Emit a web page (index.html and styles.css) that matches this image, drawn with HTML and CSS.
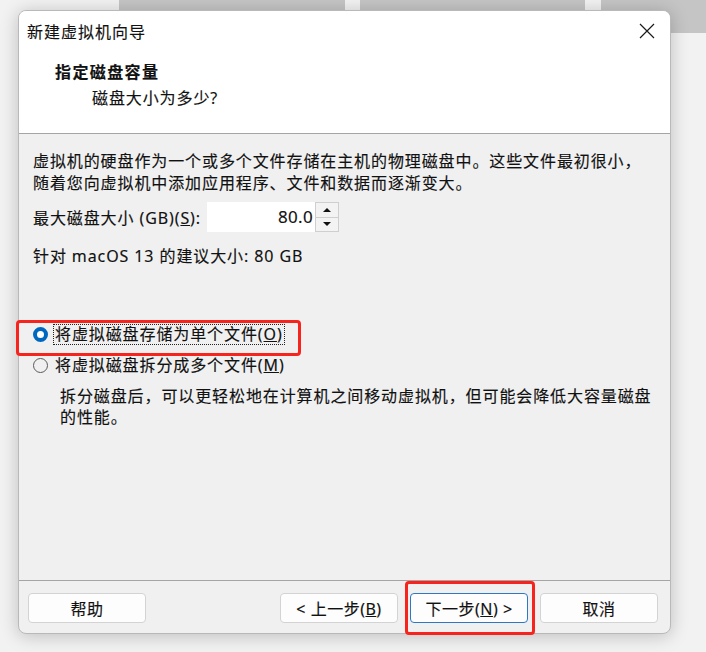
FILE: index.html
```html
<!DOCTYPE html>
<html lang="zh-CN">
<head>
<meta charset="utf-8">
<title>新建虚拟机向导</title>
<link rel="stylesheet" href="styles.css">
</head>
<body>
<div class="desktop">
  <div class="window">
    <div class="titlebar">
      <span class="title">新建虚拟机向导</span>
      <svg class="close" width="16" height="16" viewBox="0 0 16 16"><path d="M1 1L15 15M15 1L1 15" stroke="#1a1a1a" stroke-width="1.2" fill="none"/></svg>
    </div>
    <div class="header">
      <div class="h-title">指定磁盘容量</div>
      <div class="h-sub">磁盘大小为多少?</div>
    </div>
    <div class="content">
      <p class="intro">虚拟机的硬盘作为一个或多个文件存储在主机的物理磁盘中。这些文件最初很小，<br>随着您向虚拟机中添加应用程序、文件和数据而逐渐变大。</p>
      <div class="size-row">
        <span class="lbl">最大磁盘大小 (GB)(<u>S</u>):</span>
        <div class="spin">
          <div class="spin-field">80.0</div>
          <div class="spin-btns">
            <div class="spin-btn"><span class="tri-up"></span></div>
            <div class="spin-btn"><span class="tri-down"></span></div>
          </div>
        </div>
      </div>
      <p class="rec">针对 macOS 13 的建议大小: 80 GB</p>
      <div class="options">
        <div class="radio-row">
          <span class="radio checked"></span>
          <span class="radio-label focus">将虚拟磁盘存储为单个文件(<u>O</u>)</span>
        </div>
        <div class="radio-row">
          <span class="radio"></span>
          <span class="radio-label">将虚拟磁盘拆分成多个文件(<u>M</u>)</span>
        </div>
        <p class="desc">拆分磁盘后，可以更轻松地在计算机之间移动虚拟机，但可能会降低大容量磁盘<br>的性能。</p>
      </div>
    </div>
    <div class="footer">
      <button class="btn">帮助</button>
      <div class="spacer"></div>
      <button class="btn">&lt; 上一步(<u>B</u>)</button>
      <button class="btn primary">下一步(<u>N</u>) &gt;</button>
      <button class="btn">取消</button>
    </div>
  </div>
  <div class="mark mark-radio"></div>
  <div class="mark mark-next"></div>
</div>
</body>
</html>
```
FILE: styles.css
```css
* { box-sizing: border-box; }
html, body { margin: 0; padding: 0; }
body {
  width: 706px;
  height: 652px;
  overflow: hidden;
  font-family: "Noto Sans", "Noto Sans CJK SC", sans-serif;
  color: #111;
  background-color: #f2f2f2;
  background-image:
    linear-gradient(#c5c5c5, #c5c5c5),
    linear-gradient(#c5c5c5, #c5c5c5),
    linear-gradient(#c5c5c5, #c5c5c5);
  background-repeat: no-repeat;
  background-size: 226px 10px, 225px 10px, 105px 33px;
  background-position: 119px 0, 360px 0, 601px 0;
}
.desktop {
  position: relative;
  padding: 10px 35px 0 18px;
}
.window {
  width: 653px;
  height: 624px;
  border: 1px solid #b9b9b9;
  border-radius: 8px;
  background: #f0f0f0;
  overflow: hidden;
  display: flex;
  flex-direction: column;
  box-shadow: 0 2px 18px rgba(0,0,0,0.22);
  font-size: 16px;
  letter-spacing: 0.9px;
  -webkit-text-stroke: 0.15px #111;
}
.titlebar {
  height: 39px;
  flex: none;
  background: #fff;
  display: flex;
  align-items: center;
  justify-content: space-between;
  padding: 1px 15px 0 8px;
}
.title { font-size: 16px; letter-spacing: 1px; }
.close { display: block; -webkit-text-stroke: 0; }
.header {
  height: 84px;
  flex: none;
  background: #fff;
  border-bottom: 1px solid #a5a5a5;
  padding: 10px 0 0 36px;
}
.h-title { font-weight: bold; font-size: 16px; line-height: 24px; letter-spacing: 1.4px; }
.h-sub { font-size: 16px; line-height: 24px; padding-left: 37px; margin-top: 2px; }
.content {
  flex: 1;
  padding: 16px 0 0 14px;
  border-bottom: 1px solid #a5a5a5;
}
.intro { margin: 0; line-height: 22px; }
.size-row {
  display: flex;
  align-items: center;
  margin-top: 8px;
  height: 30px;
}
.lbl { width: 174px; }
.spin { display: flex; height: 30px; }
.spin-field {
  width: 108px;
  background: #fff;
  text-align: right;
  padding-right: 2px;
  line-height: 30px;
  font-size: 17px;
  letter-spacing: 0.3px;
}
.spin-btns {
  width: 24px;
  display: flex;
  flex-direction: column;
  border: 1px solid #cfcfcf;
  background: #f3f3f3;
}
.spin-btn {
  flex: 1;
  display: flex;
  align-items: center;
  justify-content: center;
}
.spin-btn + .spin-btn { border-top: 1px solid #cfcfcf; }
.tri-up { width: 0; height: 0; border-left: 4px solid transparent; border-right: 4px solid transparent; border-bottom: 4px solid #111; }
.tri-down { width: 0; height: 0; border-left: 4px solid transparent; border-right: 4px solid transparent; border-top: 4px solid #111; }
.rec { margin: 13px 0 0; line-height: 22px; }
.options { margin-top: 57px; }
.radio-row {
  display: flex;
  align-items: center;
  height: 21px;
  margin-bottom: 10px;
}
.radio {
  width: 15px;
  height: 15px;
  border-radius: 50%;
  border: 1px solid #5a5a5a;
  margin-right: 5px;
  flex: none;
}
.radio.checked {
  border: 4.5px solid #0067c0;
  background: #fff;
}
.radio-label { line-height: 19px; padding: 0 1px; border: 1px solid transparent; }
.radio-label.focus { border: 1px dotted #222; }
.desc { margin: 5px 0 0 27px; line-height: 21px; }
.footer {
  height: 52px;
  flex: none;
  display: flex;
  align-items: flex-start;
  padding: 12px 12px 0 9px;
  gap: 12px;
}
.spacer { flex: 1; }
.btn {
  width: 118px;
  height: 30px;
  background: #fdfdfd;
  border: 1px solid #d3d3d3;
  border-radius: 4px;
  font-family: inherit;
  font-size: 16px;
  letter-spacing: 0.5px;
  color: #111;
  padding: 0;
}
.btn.primary { border-color: #2f77c4; }
.mark {
  position: absolute;
  border: 3px solid #f7231d;
  border-radius: 4px;
}
.mark-radio { left: 16px; top: 320px; width: 285px; height: 36px; }
.mark-next { left: 405px; top: 581px; width: 130px; height: 54px; }
```
